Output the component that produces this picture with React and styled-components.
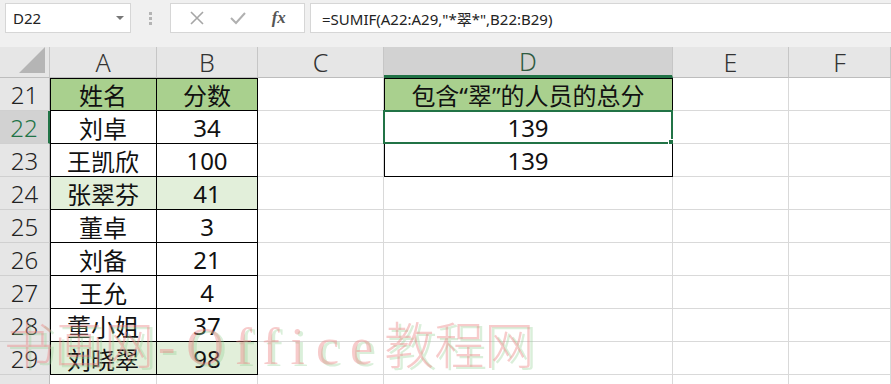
import React from 'react'
import styled, { createGlobalStyle } from 'styled-components'

const colors = {
  grid: '#d9d9d9',
  header: '#e6e6e6',
  headerSel: '#d2d2d2',
  excel: '#217346',
  green: '#a9d08e',
  lightGreen: '#e2efda',
  toolbar: '#f0f0f0',
}

const GlobalStyle = createGlobalStyle`
  html, body {
    margin: 0;
    padding: 0;
    overflow: hidden;
    background: #fff;
    font-family: "Noto Sans", "Noto Sans CJK SC", sans-serif;
  }
`

const Wrapper = styled.div`
  position: relative;
  width: 891px;
  height: 384px;
  overflow: hidden;
`

const Toolbar = styled.div`
  height: 47px;
  box-sizing: border-box;
  background: ${colors.toolbar};
  display: flex;
  align-items: flex-start;
  padding: 3px 0 0 5px;
`

const NameBox = styled.div`
  width: 126px;
  height: 30px;
  box-sizing: border-box;
  background: #fff;
  border: 1px solid #d6d6d6;
  display: flex;
  align-items: center;
  justify-content: space-between;
  padding: 0 6px 0 7px;
  font-size: 15px;
  color: #222;
`

const DropArrow = styled.span`
  width: 0;
  height: 0;
  border-left: 4px solid transparent;
  border-right: 4px solid transparent;
  border-top: 4px solid #777;
`

const Dots = styled.div`
  width: 39px;
  height: 30px;
  display: flex;
  flex-direction: column;
  align-items: center;
  justify-content: center;
  gap: 2px;
  span {
    width: 3px;
    height: 3px;
    background: #b4b4b4;
  }
`

const FuncBox = styled.div`
  width: 135px;
  height: 30px;
  box-sizing: border-box;
  background: #fff;
  border: 1px solid #d6d6d6;
  display: flex;
  align-items: center;
  justify-content: space-around;
  padding: 0 6px;
`

const Fx = styled.span`
  font-family: "Liberation Serif", serif;
  font-style: italic;
  font-weight: bold;
  font-size: 17px;
  color: #555;
`

const FormulaInput = styled.div`
  flex: 1;
  height: 30px;
  margin-left: 5px;
  box-sizing: border-box;
  background: #fff;
  border: 1px solid #d6d6d6;
  border-right: none;
  display: flex;
  align-items: center;
  padding-left: 11px;
  font-size: 15px;
  color: #222;
`

const Sheet = styled.div`
  display: grid;
  grid-template-columns: 50px 107px 101px 126px 289px 116px 1fr;
  grid-template-rows: 31px;
  grid-auto-rows: 33px;
`

const Corner = styled.div`
  background: ${colors.header};
  border-right: 1px solid #c6c6c6;
  border-bottom: 1px solid #bdbdbd;
  display: flex;
  align-items: flex-end;
  justify-content: flex-end;
  padding: 0 4px 4px 0;
  box-sizing: border-box;
`

const Triangle = styled.span`
  width: 0;
  height: 0;
  border-left: 26px solid transparent;
  border-bottom: 26px solid #b5b5b5;
`

const ColHead = styled.div`
  background: ${p => (p.$sel ? colors.headerSel : colors.header)};
  border-right: 1px solid #c6c6c6;
  border-bottom: ${p => (p.$sel ? `3px solid ${colors.excel}` : '1px solid #bdbdbd')};
  box-sizing: border-box;
  display: flex;
  align-items: center;
  justify-content: center;
  font-size: 25px;
  font-weight: 300;
  color: ${p => (p.$sel ? '#2e5a40' : '#333')};
`

const RowHead = styled.div`
  background: ${p => (p.$sel ? colors.headerSel : colors.header)};
  border-right: ${p => (p.$sel ? `2px solid ${colors.excel}` : '1px solid #bdbdbd')};
  border-bottom: 1px solid #d0d0d0;
  box-sizing: border-box;
  display: flex;
  align-items: center;
  justify-content: center;
  font-size: 24px;
  font-weight: 300;
  color: ${p => (p.$sel ? colors.excel : '#222')};
`

const Cell = styled.div`
  position: relative;
  background: ${p => p.$fill || '#fff'};
  border-right: 1px solid ${p => (p.$box ? '#000' : colors.grid)};
  border-bottom: 1px solid ${p => (p.$box ? '#000' : colors.grid)};
  box-shadow: ${p => [p.$left && 'inset 1px 0 0 #000', p.$top && 'inset 0 1px 0 #000'].filter(Boolean).join(', ') || 'none'};
  box-sizing: border-box;
  display: flex;
  align-items: center;
  justify-content: center;
  font-size: 24px;
  color: #111;
  white-space: nowrap;
`

const Selection = styled.div`
  position: absolute;
  left: -1px;
  top: -1px;
  right: -1px;
  bottom: -1px;
  border: 2px solid ${colors.excel};
  pointer-events: none;
  &::after {
    content: '';
    position: absolute;
    right: -5px;
    bottom: -5px;
    width: 6px;
    height: 6px;
    background: ${colors.excel};
    border: 1px solid #fff;
  }
`

const Watermark = styled.div`
  position: absolute;
  left: 4px;
  top: 307px;
  font-size: 50px;
  line-height: 70px;
  white-space: nowrap;
  color: rgba(236, 130, 130, 0.42);
  text-shadow: 3px 2px 0 rgba(150, 210, 150, 0.35);
  pointer-events: none;
  span {
    font-family: "Liberation Serif", serif;
    font-size: 52px;
    letter-spacing: 11px;
    margin-left: 4px;
  }
  b {
    font-family: "Noto Sans CJK SC", sans-serif;
    font-weight: 300;
  }
`

const rows = [
  { n: 21, a: '姓名', b: '分数', head: true, d: '包含“翠”的人员的总分' },
  { n: 22, a: '刘卓', b: '34', d: '139', sel: true },
  { n: 23, a: '王凯欣', b: '100', d: '139' },
  { n: 24, a: '张翠芬', b: '41', hl: true },
  { n: 25, a: '董卓', b: '3' },
  { n: 26, a: '刘备', b: '21' },
  { n: 27, a: '王允', b: '4' },
  { n: 28, a: '董小姐', b: '37' },
  { n: 29, a: '刘晓翠', b: '98', hl: true },
  { n: 30 },
]

const cols = ['A', 'B', 'C', 'D', 'E', 'F']

function X() {
  return (
    <svg width="16" height="16" viewBox="0 0 16 16">
      <path d="M2 2 L14 14 M14 2 L2 14" stroke="#a6a6a6" strokeWidth="1.6" fill="none" />
    </svg>
  )
}

function Check() {
  return (
    <svg width="18" height="16" viewBox="0 0 18 16">
      <path d="M2 8 L7 13 L16 3" stroke="#b0b0b0" strokeWidth="2" fill="none" />
    </svg>
  )
}

export default function App() {
  return (
    <Wrapper>
      <GlobalStyle />
      <Toolbar>
        <NameBox>
          D22
          <DropArrow />
        </NameBox>
        <Dots>
          <span />
          <span />
          <span />
        </Dots>
        <FuncBox>
          <X />
          <Check />
          <Fx>fx</Fx>
        </FuncBox>
        <FormulaInput>=SUMIF(A22:A29,"*翠*",B22:B29)</FormulaInput>
      </Toolbar>
      <Sheet>
        <Corner>
          <Triangle />
        </Corner>
        {cols.map(c => (
          <ColHead key={c} $sel={c === 'D'}>
            {c}
          </ColHead>
        ))}
        {rows.map(r => {
          const inTable = r.a !== undefined
          const fill = r.head ? colors.green : r.hl ? colors.lightGreen : undefined
          const inD = r.d !== undefined
          return (
            <React.Fragment key={r.n}>
              <RowHead $sel={r.sel}>{r.n}</RowHead>
              <Cell $box={inTable} $left={inTable} $top={r.head} $fill={fill}>
                {r.a}
              </Cell>
              <Cell $box={inTable} $top={r.head} $fill={fill}>
                {r.b}
              </Cell>
              <Cell />
              <Cell $box={inD} $left={inD} $top={r.head} $fill={r.head ? colors.green : undefined}>
                {r.d}
                {r.sel && <Selection />}
              </Cell>
              <Cell />
              <Cell />
            </React.Fragment>
          )
        })}
      </Sheet>
      <Watermark>
        <b>书画网</b>
        <span>-Office</span>
        <b>教程网</b>
      </Watermark>
    </Wrapper>
  )
}
